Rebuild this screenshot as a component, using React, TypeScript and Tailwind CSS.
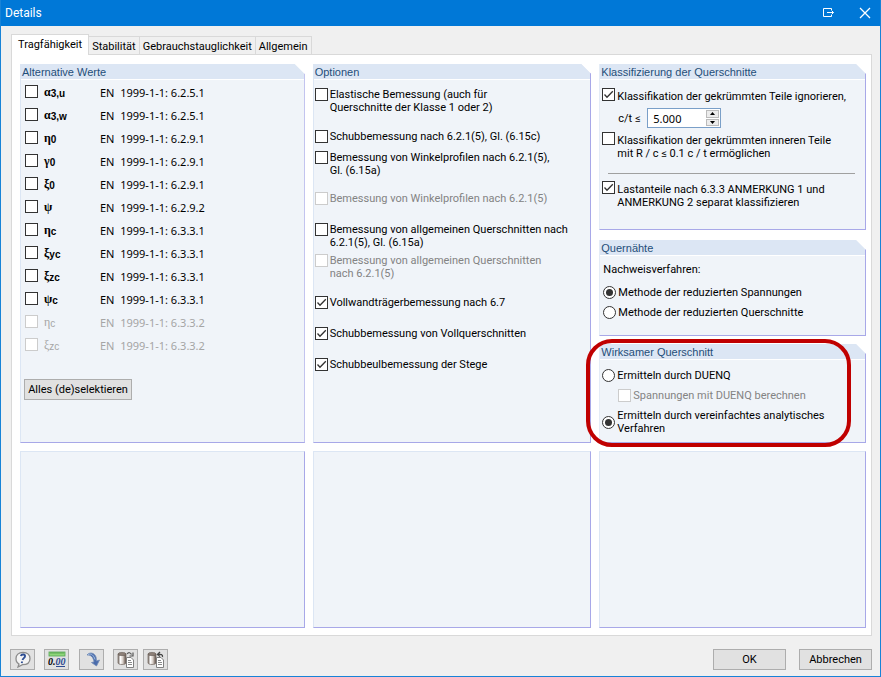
import { useState, type ReactNode } from 'react';

function Check({ on = false, disabled = false, id }: { on?: boolean; disabled?: boolean; id: string }) {
  const [checked, setChecked] = useState(on);
  return (
    <span className="grid size-[13px] shrink-0 place-items-center">
      <input
        id={id}
        type="checkbox"
        checked={checked}
        disabled={disabled}
        onChange={(e) => setChecked(e.target.checked)}
        className="col-start-1 row-start-1 size-[13px] appearance-none border border-[#333] bg-white disabled:border-[#ccc]"
      />
      {checked && (
        <svg viewBox="0 0 13 13" className="pointer-events-none col-start-1 row-start-1 size-[13px]" fill="none" stroke="#333" strokeWidth="1.3">
          <path d="M2.500 6.500 L5 9.200 L10.800 3.200" />
        </svg>
      )}
    </span>
  );
}

function Option({ id, on, disabled, low, children, className = '' }: { id: string; on?: boolean; disabled?: boolean; low?: boolean; children: ReactNode; className?: string }) {
  return (
    <div className={`flex items-start gap-[2px] ${className}`}>
      <Check id={id} on={on} disabled={disabled} />
      <label htmlFor={id} className={`${disabled ? 'text-[#838383]' : ''} ${low ? 'pt-[2px]' : ''}`}>
        {children}
      </label>
    </div>
  );
}

function Radio({ id, name, on, children, className = '' }: { id: string; name: string; on?: boolean; children: ReactNode; className?: string }) {
  return (
    <div className={`flex items-center gap-[2px] ${className}`}>
      <input
        id={id}
        type="radio"
        name={name}
        defaultChecked={on}
        className="grid size-[13px] shrink-0 appearance-none place-items-center rounded-full border border-[#333] bg-white checked:before:size-[7px] checked:before:rounded-full checked:before:bg-[#333] checked:before:content-['']"
      />
      <label htmlFor={id}>{children}</label>
    </div>
  );
}

function Group({ title, children, className = '' }: { title: string; children: ReactNode; className?: string }) {
  return (
    <section className={`flex flex-col border-r border-b border-l border-r-[#a8a8e8] border-b-[#a8a8e8] border-l-[#dce6f4] bg-[#f0f4f9] [clip-path:polygon(0_0,calc(100%-10px)_0,100%_10px,100%_100%,0_100%)] ${className}`}>
      <h2 className="h-4 border-b border-white bg-[#dce6f4] pl-px font-['Liberation_Sans',Arial,sans-serif] text-[11px] leading-4 text-[#1f4e79]">{title}</h2>
      {children}
    </section>
  );
}

const rows = [
  ['α', '3,u', '6.2.5.1'],
  ['α', '3,w', '6.2.5.1'],
  ['η', '0', '6.2.9.1'],
  ['γ', '0', '6.2.9.1'],
  ['ξ', '0', '6.2.9.1'],
  ['ψ', '', '6.2.9.2'],
  ['η', 'c', '6.3.3.1'],
  ['ξ', 'yc', '6.3.3.1'],
  ['ξ', 'zc', '6.3.3.1'],
  ['ψ', 'c', '6.3.3.1'],
  ['η', 'c', '6.3.3.2'],
  ['ξ', 'zc', '6.3.3.2'],
];

const tabs = ['Tragfähigkeit', 'Stabilität', 'Gebrauchstauglichkeit', 'Allgemein'];

const button = 'border border-[#adadad] bg-[#e1e1e1] h-[21px] flex items-center justify-center';

function Database() {
  return (
    <>
      <defs>
        <linearGradient id="metal">
          <stop offset="0" stopColor="#6b5f58" />
          <stop offset=".3" stopColor="#ffffff" />
          <stop offset=".6" stopColor="#d8cfc8" />
          <stop offset="1" stopColor="#55463e" />
        </linearGradient>
      </defs>
      <path d="M1 3 V12 C1.500 14 8.500 14 9 12 V3Z" fill="url(#metal)" stroke="#7d736c" strokeWidth=".8" />
      <ellipse cx="5" cy="3" rx="4" ry="1.600" fill="#8d8078" stroke="#5e544e" strokeWidth=".6" />
      <path d="M9.500 6.500 H14 L16.500 9 V16.500 H9.500 Z" fill="#fff" stroke="#808080" />
      <path d="M11 9.500 H14 M11 11.500 H15 M11 13.500 H15" stroke="#8a8a8a" />
    </>
  );
}

export default function App() {
  const [active, setActive] = useState(0);
  return (
    <div className="flex min-h-screen flex-col border border-t-0 border-[#1883d7] bg-[#f0f0f0] font-['Roboto',Tahoma,sans-serif] text-[11px] leading-[13px] text-black">
      <header className="flex h-[26px] items-center bg-[#0078d7] pr-[9px] pl-1 text-white">
        <h1 className="grow text-[12px]">Details</h1>
        <button aria-label="Andocken" className="mr-[24px]">
          <svg width="13" height="12" viewBox="0 0 13 12" fill="none" stroke="#fff" className="block">
            <path d="M9.500 3.500 V1.500 H1.500 V9.500 H9.500 V7.500 M5 5.500 H11.500 M10 4 L11.500 5.500 L10 7" />
          </svg>
        </button>
        <button aria-label="Schließen">
          <svg width="12" height="12" viewBox="0 0 12 12" stroke="#fff" strokeWidth="1.300" className="block">
            <path d="M1 1 L11 11 M11 1 L1 11" />
          </svg>
        </button>
      </header>

      <main className="flex grow flex-col pt-2 pr-2 pl-[10px]">
        <div role="tablist" className="flex h-5 items-end">
          {tabs.map((t, i) => (
            <button
              key={t}
              role="tab"
              aria-selected={active === i}
              onClick={() => setActive(i)}
              className={
                active === i
                  ? 'z-10 -mb-px h-[21px] border border-b-0 border-[#d9d9d9] bg-white px-[6px] pb-[2px]'
                  : 'h-[18px] border-t border-r border-[#d9d9d9] px-[3px] pt-px'
              }
            >
              {t}
            </button>
          ))}
        </div>

        <div className="grid grow grid-cols-[285fr_279fr_267fr] grid-rows-[auto_1fr] gap-x-[8px] gap-y-2 border border-[#d9d9d9] bg-white pt-[9px] pr-[5px] pb-[7px] pl-[8px]">
          <Group title="Alternative Werte">
            <div className="pl-[4px]">
              {rows.map(([greek, sub, ref], i) => (
                <div key={i} className="flex h-[23px] items-center">
                  <Check id={`w${i}`} disabled={i > 9} />
                  <label htmlFor={`w${i}`} className={`flex grow items-center pl-[6px] ${i > 9 ? 'text-[#a5a5a5]' : ''}`}>
                    <span className={`w-[56px] pt-[2px] font-['Liberation_Serif',serif] text-[12px] ${i > 9 ? '' : 'font-bold'}`}>
                      {greek}
                      <span className="relative top-px font-['Liberation_Sans',Arial,sans-serif] text-[10px]">{sub}</span>
                    </span>
                    <span className="pt-[2px] font-['Noto_Sans',sans-serif] whitespace-pre">EN  1999-1-1: {ref}</span>
                  </label>
                </div>
              ))}
              <button className={`${button} mt-[23px] -ml-px w-[108px]`}>Alles (de)selektieren</button>
            </div>
          </Group>

          <Group title="Optionen">
            <div className="pt-2 pl-px">
              <Option id="o1">Elastische Bemessung (auch für<br />Querschnitte der Klasse 1 oder 2)</Option>
              <Option id="o2" className="mt-4">Schubbemessung nach 6.2.1(5), Gl. (6.15c)</Option>
              <Option id="o3" className="mt-2">Bemessung von Winkelprofilen nach 6.2.1(5),<br />Gl. (6.15a)</Option>
              <Option id="o4" disabled className="mt-[15px]">Bemessung von Winkelprofilen nach 6.2.1(5)</Option>
              <Option id="o5" className="mt-[18px]">Bemessung von allgemeinen Querschnitten nach<br />6.2.1(5), Gl. (6.15a)</Option>
              <Option id="o6" disabled className="mt-[5px]">Bemessung von allgemeinen Querschnitten<br />nach 6.2.1(5)</Option>
              <Option id="o7" on className="mt-4">Vollwandträgerbemessung nach 6.7</Option>
              <Option id="o8" on className="mt-[18px]">Schubbemessung von Vollquerschnitten</Option>
              <Option id="o9" on className="mt-[18px]">Schubbeulbemessung der Stege</Option>
            </div>
          </Group>

          <div className="flex flex-col">
            <Group title="Klassifizierung der Querschnitte">
              <div className="pt-2 pb-[20px] pl-[2px]">
                <Option id="k1" on low>Klassifikation der gekrümmten Teile ignorieren,</Option>
                <div className="mt-[5px] flex items-center pl-4">
                  <label htmlFor="ct" className="w-[29px] whitespace-nowrap">c/t ≤</label>
                  <div className="flex h-5 w-[74px] border border-[#7a9fc8] bg-white p-px">
                    <input id="ct" defaultValue="5.000" className="w-0 grow bg-transparent pl-1 font-['Noto_Sans',sans-serif] outline-none" />
                    <span className="flex w-[13px] flex-col gap-px">
                      <button aria-label="Erhöhen" className="flex grow items-center justify-center border border-[#bbb] bg-[#ececec]">
                        <svg width="5" height="3" viewBox="0 0 5 3"><path d="M0 3 L2.500 0 L5 3Z" /></svg>
                      </button>
                      <button aria-label="Verringern" className="flex grow items-center justify-center border border-[#bbb] bg-[#ececec]">
                        <svg width="5" height="3" viewBox="0 0 5 3"><path d="M0 0 L2.500 3 L5 0Z" /></svg>
                      </button>
                    </span>
                  </div>
                </div>
                <Option id="k2" low className="mt-1">Klassifikation der gekrümmten inneren Teile<br />mit R / c ≤ 0.1 c / t ermöglichen</Option>
                <hr className="mt-[13px] mr-[10px] ml-[6px] border-[#a0a0a0]" />
                <Option id="k3" on low className="mt-[7px]">Lastanteile nach 6.3.3 ANMERKUNG 1 und<br />ANMERKUNG 2 separat klassifizieren</Option>
              </div>
            </Group>

            <Group title="Quernähte" className="mt-[10px]">
              <div className="pt-[7px] pb-[16px] pl-[3px]">
                <p>Nachweisverfahren:</p>
                <Radio id="n1" name="naht" on className="mt-[10px]">Methode der reduzierten Spannungen</Radio>
                <Radio id="n2" name="naht" className="mt-[7px]">Methode der reduzierten Querschnitte</Radio>
              </div>
            </Group>

            <div className="relative mt-2 flex grow flex-col">
              <Group title="Wirksamer Querschnitt" className="grow">
                <div className="pt-[9px] pb-[7px] pl-[2px]">
                  <Radio id="q1" name="quer">Ermitteln durch DUENQ</Radio>
                  <Option id="q2" disabled className="mt-[7px] ml-4">Spannungen mit DUENQ berechnen</Option>
                  <Radio id="q3" name="quer" on className="mt-[7px]">Ermitteln durch vereinfachtes analytisches<br />Verfahren</Radio>
                </div>
              </Group>
              <div className="pointer-events-none absolute -top-[5px] right-[15px] -bottom-[4px] -left-[13px] rounded-[26px] border-4 border-[#c00000]" />
            </div>
          </div>

          {[0, 1, 2].map((i) => (
            <div key={i} className="border border-t-[#dce6f4] border-r-[#a8a8e8] border-b-[#a8a8e8] border-l-[#dce6f4] bg-[#f0f4f9]" />
          ))}
        </div>
      </main>

      <footer className="flex items-center pt-[13px] pr-2 pb-[6px] pl-[9px]">
        <button aria-label="Hilfe" className={`${button} w-[25px]`}>
          <svg width="18" height="17" viewBox="0 0 18 17">
            <path d="M9 1.500 C4.500 1.500 2 4 2 7.500 C2 10 3 12 5 13 L4 16 L8.500 13.700 C13.500 13.700 16 11 16 7.500 C16 4 13.500 1.500 9 1.500Z" fill="#f4f4f4" stroke="#8c8c8c" strokeWidth="1.300" />
            <path d="M6.800 5 C7.500 2.800 11.500 3 11 5.300 C10.700 7.200 9 7 8.500 9 M8 10.500 L7.800 12.200" fill="none" stroke="#2f4f94" strokeWidth="1.900" />
          </svg>
        </button>
        <button aria-label="Dezimalstellen" className={`${button} ml-[9px] w-[25px]`}>
          <svg width="18" height="17" viewBox="0 0 18 17">
            <rect x="1" y="1" width="16" height="4" fill="#8ed67a" stroke="#55a555" strokeWidth=".8" />
            <path d="M3 1 V3 M5 1 V3 M7 1 V3 M9 1 V3 M11 1 V3 M13 1 V3 M15 1 V3" stroke="#3e8e3e" strokeWidth=".6" />
            <text x="0" y="14" fontSize="10" fontWeight="bold" fontStyle="italic" fontFamily="Liberation Serif">0.<tspan fill="#2c4a90">00</tspan></text>
            <path d="M8 15.500 H17" stroke="#2c4a90" />
          </svg>
        </button>
        <button aria-label="Übernehmen" className={`${button} ml-[10px] w-[25px]`}>
          <svg width="18" height="17" viewBox="0 0 18 17">
            <path d="M4 4 C7 .5 11.500 2 13 6 L13.500 10 L16.500 9 L13.500 15 L8.500 11.500 L11 11 C10.500 6.500 8 3.500 4 4Z" fill="#4a6cac" stroke="#7089b4" strokeWidth=".8" />
            <path d="M5 3.500 C8.500 2 10.800 4.500 12 8.500" fill="none" stroke="#a7c1e2" />
          </svg>
        </button>
        <button aria-label="Standard laden" className={`${button} ml-[9px] w-[25px]`}>
          <svg width="18" height="17" viewBox="0 0 18 17">
            <Database />
            <path d="M10 3 C11.500 1 13.500 1.500 14.500 3.500 M16 1.500 V5 H12.500" fill="none" stroke="#555" strokeWidth="1.200" />
          </svg>
        </button>
        <button aria-label="Als Standard speichern" className={`${button} ml-[5px] w-[25px]`}>
          <svg width="18" height="17" viewBox="0 0 18 17">
            <Database />
            <path d="M15.500 6 C16 3.500 14 3 10.500 3.500 M13 1 L10.500 3.500 L13 5.500" fill="none" stroke="#444" strokeWidth="1.300" />
          </svg>
        </button>
        <span className="grow" />
        <button className={`${button} w-[73px]`}>OK</button>
        <button className={`${button} ml-[13px] w-[73px]`}>Abbrechen</button>
      </footer>
    </div>
  );
}
